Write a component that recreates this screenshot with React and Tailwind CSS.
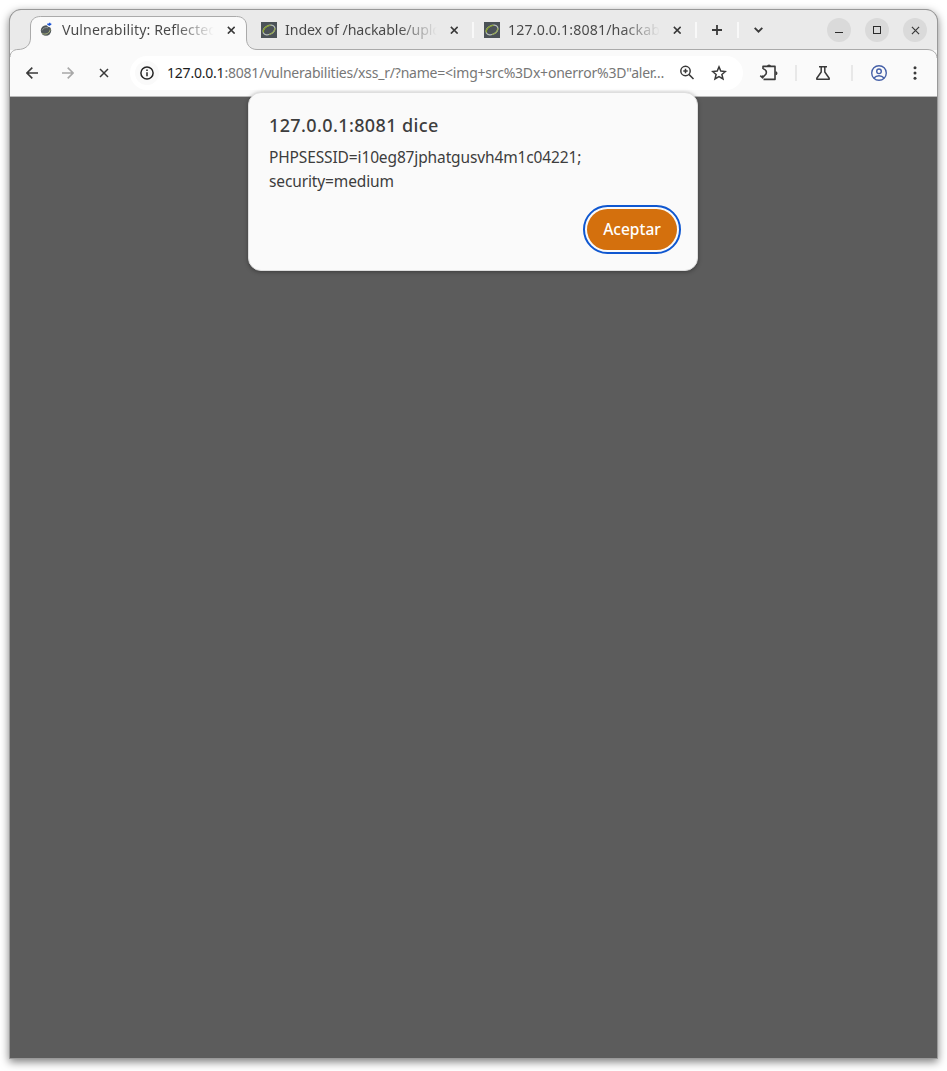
import React from "react";

function Cross({ className, size = 10, width = 1.8 }) {
  return (
    <svg className={className} width={size} height={size} viewBox="0 0 10 10" fill="none" stroke="currentColor" strokeWidth={width}>
      <path d="M1 1l8 8M9 1l-8 8" />
    </svg>
  );
}

function Favicon() {
  return (
    <svg className="shrink-0" width="16" height="16" viewBox="0 0 16 16">
      <path fill="#4b5257" d="M0 0h16v16H0z" />
      <g fill="none" transform="rotate(-28 8 8)">
        <ellipse cx="8" cy="8" rx="6.3" ry="4.3" stroke="#b5bdb8" strokeWidth="1.3" />
        <path d="M2 7.5C3 3.8 8 3 11.5 4.6" stroke="#87a127" strokeWidth="1.2" />
        <path d="M14 9c-1 3-5 4-8 3" stroke="#8fa63a" strokeWidth="1" />
      </g>
    </svg>
  );
}

function SmallFavicon() {
  return (
    <svg className="shrink-0" width="16" height="16" viewBox="0 0 16 16">
      <circle cx="8" cy="8.5" r="5.2" fill="#51585b" />
      <path d="M4.300 11.500c3 1.500 7.500 0 7.800-4" fill="none" stroke="#a8b179" strokeWidth="1" />
      <path d="M4 8.500c1-2.500 3.500-3.300 6-2.800" fill="none" stroke="#8d9392" strokeWidth="1" />
      <circle cx="11.500" cy="2.800" r="2.400" fill="#fafafa" />
      <path d="M9.300 1.500h1.700v-.8h1.300v.8h1v1.500h-1v.8h-1.800v-.9h-1.200z" fill="#1650d8" />
    </svg>
  );
}

function TabTitle({ className, children }) {
  return (
    <span className={"-mt-px block w-[152px] whitespace-nowrap text-[14.2px] leading-5 " + className}>
      <span className="block bg-linear-to-r from-[#474747] from-75% to-transparent to-100% bg-clip-text text-transparent">{children}</span>
    </span>
  );
}

function Separator({ className }) {
  return <span className={"h-4 w-[2px] shrink-0 " + className} />;
}

function TabStrip() {
  return (
    <div className="relative flex h-10 shrink-0 items-center bg-[#eaeaea] text-[#3a3a3a]">
      <svg className="absolute left-0 top-0" width="927" height="48" viewBox="0 0 927 48" fill="none">
        <path
          d="M0 48V47.500C0 42.500 3.500 39.500 8 39.500C15 39.500 20.500 35.500 20.500 28V16C20.500 10 24.500 6.500 30.500 6.500H226.500C232.500 6.500 236.500 10 236.500 16V29C236.500 35.500 241 39.500 247 39.500H917C923 39.500 927 43 927 48z"
          fill="#fafafa"
        />
        <path
          d="M0 47C0 42.500 3.500 39.500 8 39.500C15 39.500 20.500 35.500 20.500 28V16C20.500 10 24.500 6.500 30.500 6.500H226.500C232.500 6.500 236.500 10 236.500 16V29C236.500 35.500 241 39.500 247 39.500H917C923 39.500 927 43 927 48"
          stroke="#aaa"
        />
      </svg>
      <div className="relative flex w-full items-center">
        <div className="flex w-[237px] items-center pl-7">
          <SmallFavicon />
          <TabTitle className="ml-2 tracking-[0.1px]">Vulnerability: Reflected</TabTitle>
          <Cross className="ml-[13px]" size={8.5} />
        </div>
        <div className="flex w-[225px] items-center pl-[14px]">
          <Favicon />
          <TabTitle className="ml-2 tracking-[-0.1px]">Index of /hackable/uplo</TabTitle>
          <Cross className="ml-[13px]" size={8.5} />
        </div>
        <Separator className="bg-[#f8f8f8]" />
        <div className="flex w-[221px] items-center pl-[10px]">
          <Favicon />
          <TabTitle className="ml-2 tracking-[0.13px]">127.0.0.1:8081/hackab</TabTitle>
          <Cross className="ml-[13px]" size={8.5} />
        </div>
        <Separator className="bg-[#f8f8f8]" />
        <svg className="ml-[15px]" width="10" height="10" viewBox="0 0 10 10" stroke="currentColor" strokeWidth="1.800">
          <path d="M5 0v10M0 5h10" />
        </svg>
        <Separator className="ml-[15px] bg-[#f8f8f8]" />
        <svg className="ml-[15px]" width="9" height="6" viewBox="0 0 9 6" fill="none" stroke="currentColor" strokeWidth="1.900">
          <path d="M.7.800l3.800 3.800L8.300.8" />
        </svg>
        <div className="ml-auto mr-[10px] flex gap-[14px]">
          <span className="flex size-6 items-center justify-center rounded-full bg-[#dadada]">
            <span className="mt-[5px] h-px w-2 bg-[#2b2b2b]" />
          </span>
          <span className="flex size-6 items-center justify-center rounded-full bg-[#dadada]">
            <span className="size-2 border border-[#2b2b2b]" />
          </span>
          <span className="flex size-6 items-center justify-center rounded-full bg-[#dadada]">
            <Cross size={9} width={1.3} />
          </span>
        </div>
      </div>
    </div>
  );
}

function Arrow({ className }) {
  return (
    <svg className={className} width="12" height="12" viewBox="0 0 12 12" fill="none" stroke="currentColor" strokeWidth="1.600">
      <path d="M12 6H1M6.300.600L.900 6l5.400 5.400" />
    </svg>
  );
}

function Toolbar() {
  return (
    <div className="flex h-[47px] shrink-0 items-center border-b border-[#b8b8b8] bg-[#fafafa] text-[#3a3a3a]">
      <div className="relative flex h-full w-full items-center">
        <Arrow className="ml-4" />
        <Arrow className="ml-6 rotate-180 text-[#a8a8a8]" />
        <Cross className="ml-[25px]" width={1.5} />
        <div className="ml-[21px] flex h-[34px] w-[613px] items-center rounded-full bg-white">
          <span className="ml-[5px] flex size-6 items-center justify-center rounded-full bg-[#fafafa] text-[#242424]">
            <svg width="14" height="14" viewBox="0 0 14 14" fill="none" stroke="currentColor" strokeWidth="1.500">
              <circle cx="7" cy="7" r="6.100" />
              <path d="M7 6.200v4.100M7 3.600v1.500" />
            </svg>
          </span>
          <span className="ml-2 w-[499px] whitespace-nowrap text-[14px] leading-5 tracking-[-0.21px] text-[#777]">
            <span className="text-[#1d1d1d]">127.0.0.1</span>:8081/vulnerabilities/xss_r/?name=&lt;img+src%3Dx+onerror%3D"aler…
          </span>
          <svg className="ml-[13px]" width="16" height="16" viewBox="0 0 16 16" fill="none" stroke="currentColor" strokeWidth="1.500">
            <circle cx="6.500" cy="6" r="4.700" />
            <path d="M9.900 9.400L14.500 14M4.300 6h4.400M6.500 3.800v4.400" />
          </svg>
          <svg className="ml-4" width="16" height="16" viewBox="0 0 16 16" fill="none" stroke="currentColor" strokeWidth="1.500">
            <path d="M8 1.900l1.800 4.200 4.600.4-3.500 3 1.100 4.500-4-2.400L4 14l1.100-4.500-3.500-3 4.600-.4z" />
          </svg>
        </div>
        <svg className="ml-4" width="20" height="18" viewBox="0 0 20 18" fill="none">
          <path
            d="M4 5V2.400H16V15.400H4.500M4 4.800C6.800 5.500 8 7.500 7 10L3.500 13.800L1.300 11.600M3.500 13.800L4 11.400"
            stroke="currentColor"
            strokeWidth="1.600"
            strokeLinejoin="round"
          />
          <path d="M8 2.200a2 1.700 0 0 1 4 0zM16.500 7.200a2 2 0 0 1 0 4z" fill="currentColor" />
        </svg>
        <Separator className="ml-[16px] bg-[#e8e8e8]" />
        <svg className="ml-[18px]" width="16" height="16" viewBox="0 0 16 16" fill="none" stroke="currentColor" strokeWidth="1.500" strokeLinejoin="round">
          <path d="M4 1.800h8M6.200 2v5L1.800 13.200V14.200H14.200V13.200L9.800 7V2" />
        </svg>
        <Separator className="ml-5 bg-[#e8e8e8]" />
        <svg className="ml-[18px] text-[#4661a8]" width="16" height="16" viewBox="0 0 16 16" fill="none" stroke="currentColor" strokeWidth="1.400">
          <circle cx="8" cy="8" r="7.300" />
          <circle cx="8" cy="6.300" r="2.300" />
          <path d="M3 13c2.500-3 7.500-3 10 0" />
        </svg>
        <svg className="ml-[26px]" width="4" height="14" viewBox="0 0 4 14" fill="currentColor">
          <circle cx="2" cy="1.800" r="1.500" />
          <circle cx="2" cy="7" r="1.500" />
          <circle cx="2" cy="12.200" r="1.500" />
        </svg>
      </div>
    </div>
  );
}

function AlertDialog() {
  return (
    <div className="absolute left-[238px] top-[82px] flex h-[179px] w-[450px] flex-col rounded-[13px] border border-[#dedede] bg-[#fafafa] px-5 pt-5 text-[#3d3d3d] shadow-[0_1px_4px_rgba(0,0,0,0.35)]">
      <h1 className="whitespace-nowrap text-[18px] font-medium leading-6 tracking-[0.38px]">127.0.0.1:8081 dice</h1>
      <p className="mt-2 w-[330px] whitespace-nowrap text-[15.500px] leading-6 tracking-[-0.13px]">
        PHPSESSID=i10eg87jphatgusvh4m1c04221;
        <br />
        security=medium
      </p>
      <button className="mt-4 flex h-[41px] w-[90px] items-center justify-center self-end rounded-full bg-[#d4700d] text-[15.500px] font-medium text-white outline-2 outline-offset-2 outline-[#0f57d0]">
        Aceptar
      </button>
    </div>
  );
}

export default function App() {
  return (
    <div className="h-[1071px] w-[947px] overflow-hidden bg-white pl-[9px] pt-[9px] font-['Noto_Sans','Open_Sans',sans-serif]">
      <div className="relative flex h-[1050px] w-[929px] flex-col rounded-t-[12px] border border-[#999] bg-[#5c5c5c] shadow-[0_3px_9px_rgba(0,0,0,0.5)]">
        <div className="overflow-hidden rounded-t-[11px]">
          <TabStrip />
          <Toolbar />
        </div>
        <main className="grow bg-[#5c5c5c]" />
        <AlertDialog />
      </div>
    </div>
  );
}
